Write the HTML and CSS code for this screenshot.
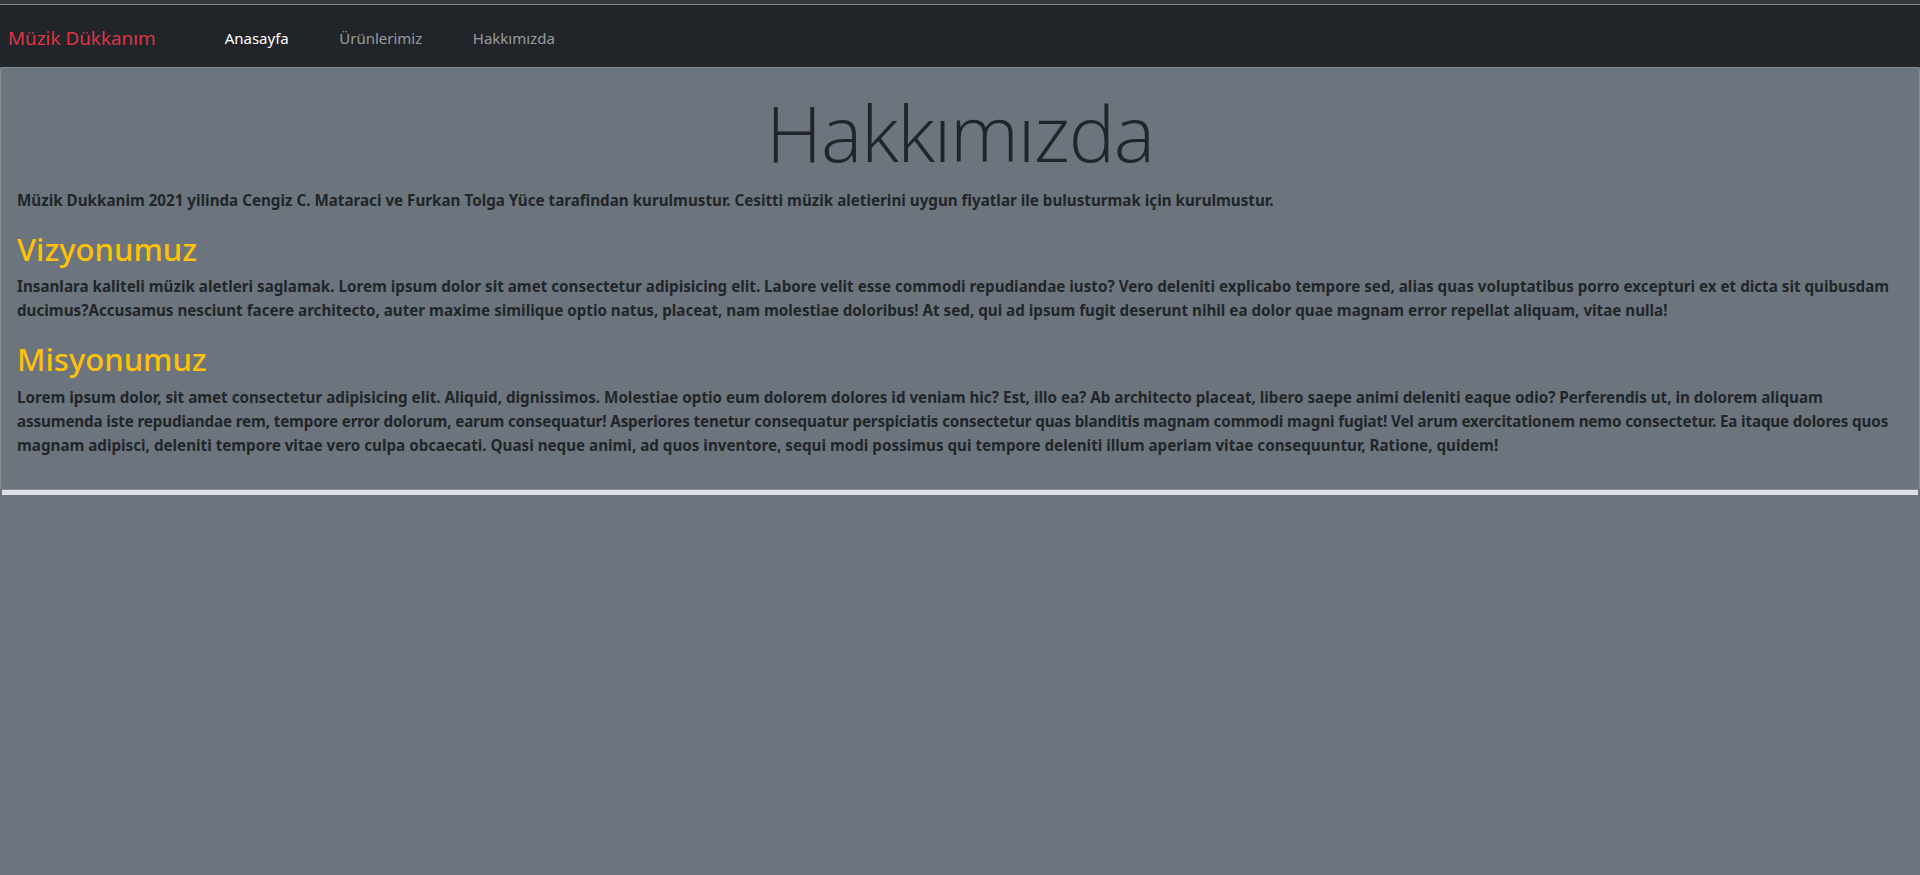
FILE: index.html
```html
<!DOCTYPE html>
<html lang="tr">
<head>
<meta charset="utf-8">
<title>Hakkımızda - Müzik Dükkanım</title>
<link rel="stylesheet" href="styles.css">
</head>
<body>
<div class="chrome-strip"></div>
<nav class="navbar">
  <a class="brand" href="#">Müzik Dükkanım</a>
  <ul class="nav">
    <li><a class="nav-link active" href="#">Anasayfa</a></li>
    <li><a class="nav-link" href="#">Ürünlerimiz</a></li>
    <li><a class="nav-link" href="#">Hakkımızda</a></li>
  </ul>
</nav>
<main class="about">
  <h1 class="display">Hakkımızda</h1>
  <p class="lead-text">Müzik Dukkanim 2021 yilinda Cengiz C. Mataraci ve Furkan Tolga Yüce tarafindan kurulmustur. Cesitti müzik aletierini uygun fiyatlar ile bulusturmak için kurulmustur.</p>
  <h2 class="section-title">Vizyonumuz</h2>
  <p class="lead-text">Insanlara kaliteli müzik aletleri saglamak. Lorem ipsum dolor sit amet consectetur adipisicing elit. Labore velit esse commodi repudiandae iusto? Vero deleniti explicabo tempore sed, alias quas voluptatibus porro excepturi ex et dicta sit quibusdam ducimus?Accusamus nesciunt facere architecto, auter maxime similique optio natus, placeat, nam molestiae doloribus! At sed, qui ad ipsum fugit deserunt nihil ea dolor quae magnam error repellat aliquam, vitae nulla!</p>
  <h2 class="section-title">Misyonumuz</h2>
  <p class="lead-text">Lorem ipsum dolor, sit amet consectetur adipisicing elit. Aliquid, dignissimos. Molestiae optio eum dolorem dolores id veniam hic? Est, illo ea? Ab architecto placeat, libero saepe animi deleniti eaque odio? Perferendis ut, in dolorem aliquam <span class="tight">assumenda iste repudiandae rem, tempore error dolorum, earum consequatur! Asperiores tenetur consequatur perspiciatis consectetur quas blanditis magnam commodi magni fugiat! Vel arum exercitationem nemo consectetur. Ea itaque dolores quos</span> magnam adipisci, deleniti tempore vitae vero culpa obcaecati. Quasi neque animi, ad quos inventore, sequi modi possimus qui tempore deleniti illum aperiam vitae consequuntur, Ratione, quidem!</p>
</main>
<div class="rule"></div>
</body>
</html>
```
FILE: styles.css
```css
* { box-sizing: border-box; }
html, body {
  margin: 0;
  padding: 0;
}
body {
  background: #6c757d;
  font-family: "Noto Sans", "Open Sans", sans-serif;
  font-size: 15.1px;
  line-height: 24px;
  color: #212529;
}
.chrome-strip {
  height: 5px;
  background: #37393c;
  border-bottom: 1px solid #8a8c8f;
}
.navbar {
  height: 62px;
  background: #212529;
  display: flex;
  align-items: center;
  padding: 4px 8px 0;
}
.brand {
  color: #dc3545;
  font-size: 18.85px;
  text-decoration: none;
  margin-right: 69px;
}
.nav {
  list-style: none;
  margin: 0;
  padding: 0;
  display: flex;
  gap: 50.5px;
}
.nav-link {
  color: rgba(255, 255, 255, 0.55);
  text-decoration: none;
  font-size: 15px;
}
.nav-link.active {
  color: #fff;
}
.about {
  border: 1px solid #868c93;
  border-radius: 4px;
  padding: 16px;
  background: #6c757d;
}
.display {
  margin: 0 0 8px;
  font-family: "Open Sans", sans-serif;
  font-weight: 300;
  font-size: 78px;
  letter-spacing: -1.3px;
  line-height: 96px;
  text-align: center;
  color: #212529;
}
.lead-text {
  margin: 0 0 16px;
  font-size: 15.2px;
  font-weight: 700;
}
.tight {
  letter-spacing: -0.13px;
}
.section-title {
  margin: 0 0 8px;
  padding-top: 2px;
  height: 38.4px;
  font-size: 31px;
  font-weight: 500;
  line-height: 38.4px;
  color: #ffc107;
}
.rule {
  height: 5px;
  margin: 0 2px;
  background: #dee2e6;
}
```
